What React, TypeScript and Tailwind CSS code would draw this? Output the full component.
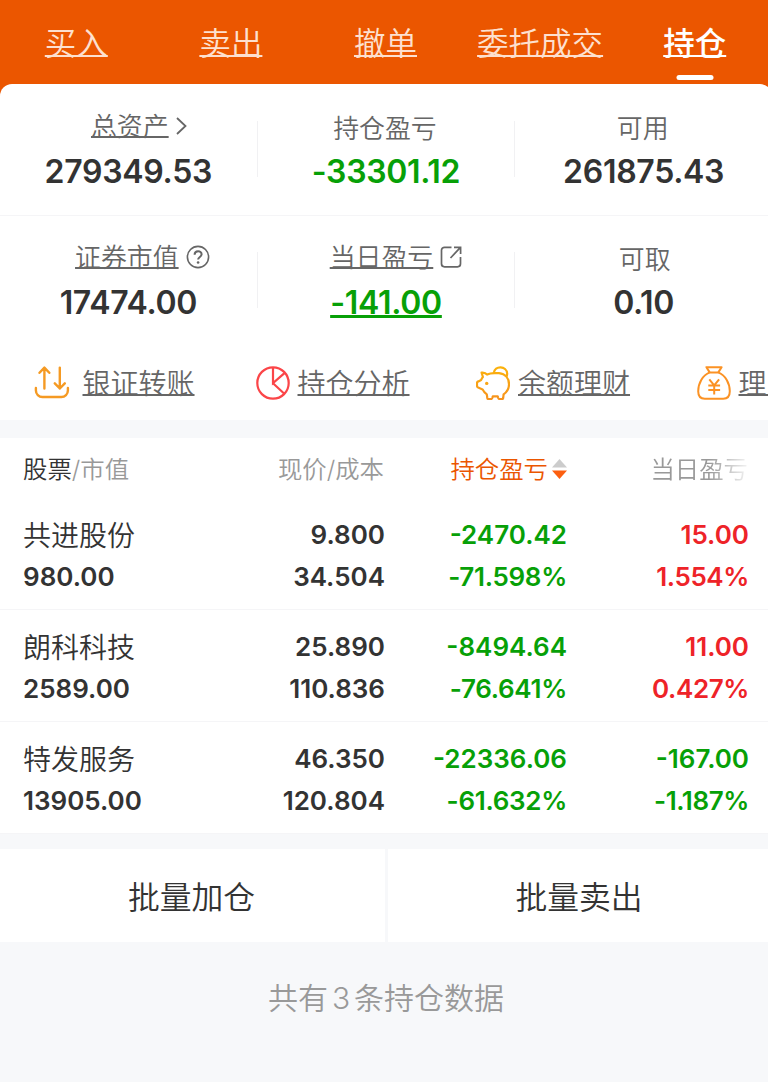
import type { ReactNode } from "react";
import { clsx } from "clsx";

const tabs = ["买入", "卖出", "撤单", "委托成交", "持仓"];

const link = "underline [text-decoration-skip-ink:none]";

const holdings = [
  { name: "共进股份", value: "980.00", price: "9.800", cost: "34.504", profit: "-2470.42", rate: "-71.598%", day: "15.00", dayRate: "1.554%" },
  { name: "朗科科技", value: "2589.00", price: "25.890", cost: "110.836", profit: "-8494.64", rate: "-76.641%", day: "11.00", dayRate: "0.427%" },
  { name: "特发服务", value: "13905.00", price: "46.350", cost: "120.804", profit: "-22336.06", rate: "-61.632%", day: "-167.00", dayRate: "-1.187%" },
];

const tone = (n: string) => (n.startsWith("-") ? "text-[#07a007]" : "text-[#ee2328]");

function ChevronIcon() {
  return (
    <svg width="11" height="18" viewBox="0 0 11 18" fill="none" stroke="#666" strokeWidth="1.8">
      <path d="M1 1l8.5 8L1 17" />
    </svg>
  );
}

function HelpIcon() {
  return (
    <svg width="24" height="24" viewBox="0 0 24 24" fill="none" stroke="#666" strokeWidth="1.6">
      <circle cx="12" cy="12" r="10.6" />
      <path d="M8.6 9.8c0-4.7 7-4.5 7-.5 0 2.7-3.5 2.6-3.5 5.3" strokeWidth="2" />
      <circle cx="12.1" cy="17.5" r="1.3" fill="#666" stroke="none" />
    </svg>
  );
}

function OpenIcon() {
  return (
    <svg width="22" height="22" viewBox="0 0 22 22" fill="none" stroke="#666" strokeWidth="1.7">
      <path d="M11.5 1.3H4.5a3 3 0 0 0-3 3v13.5a3 3 0 0 0 3 3h13a3 3 0 0 0 3-3V11" />
      <path d="M14 1.3h6.6V8M20.2 1.7L10.5 12" />
    </svg>
  );
}

function TransferIcon() {
  return (
    <svg className="mr-[4.5px] -ml-px" width="36" height="34" viewBox="0 0 36 34" fill="none" stroke="#f59a23" strokeWidth="2.4" strokeLinecap="round" strokeLinejoin="round">
      <path d="M1.9 22v2.5a6.5 6.5 0 0 0 6.5 6.500h19a6.500 6.500 0 0 0 6.500-6.500V22" />
      <path d="M10.400 22.500V1.600M5.500 6.800l4.900-5.200 4.900 5.200M25.800 1.600v20.900M20.800 17.300l5 5.200 5-5.200" />
    </svg>
  );
}

function PieIcon() {
  return (
    <svg width="34" height="34" viewBox="0 0 34 34" fill="none" stroke="#fb4548" strokeWidth="2.2">
      <circle cx="17" cy="17" r="15.7" />
      <path d="M17 1.300v15.900l11.500-10M17 17.200L28.600 28" />
    </svg>
  );
}

function PiggyIcon() {
  return (
    <svg width="34" height="34" viewBox="0 0 34 34" fill="none" strokeWidth="2.2" strokeLinejoin="round">
      <defs>
        <linearGradient id="piggy" x1="0" y1="0" x2="0" y2="34" gradientUnits="userSpaceOnUse">
          <stop stopColor="#fbb30b" />
          <stop offset="1" stopColor="#f6921e" />
        </linearGradient>
      </defs>
      <g stroke="url(#piggy)">
        <path d="M5.600 6.600c2.600-.3 4.300.4 5.500 2 2-1 4.200-1.400 7.500-1.400h4.400C29.500 8 33 12.600 33 18.200c0 4.400-2 7.800-5.400 10.100L27.200 32c-.1.600-.5 1-1.100 1h-2.700c-.6 0-1-.4-1.200-1l-.5-1.700h-4.900l-.5 1.700c-.2.600-.6 1-1.200 1h-2.700c-.6 0-1-.4-1.100-1l-.5-3.700c-2-1.300-3.300-2.900-4.200-4.900L2.200 21.600C1.400 21.200 1 20.500 1 19.700v-2.500c0-.8.500-1.500 1.300-1.800l2.900-1.500c.4-1 .9-2 1.700-2.900z" />
        <path d="M17.800 7.200c.7-8 13-7.800 13.400.5 0 1.500-.4 2.600-1.200 3.500" />
      </g>
      <circle cx="10.700" cy="17.400" r="1.700" fill="#f9a514" />
    </svg>
  );
}

function MoneyBagIcon() {
  return (
    <svg width="34" height="34" viewBox="0 0 34 34" fill="none" stroke="#fb9224" strokeWidth="2" strokeLinejoin="round">
      <path d="M9.400 1.200h15.200l-3.300 5.200h-8.600z" />
      <path d="M12.700 6.400C5.500 9.500 1.200 17 1.200 25.300c0 4.700 2.400 7.500 6.600 7.500h18.400c4.200 0 6.600-2.800 6.600-7.500 0-8.300-4.300-15.800-11.500-18.900" />
      <path d="M12.300 13.300l4.900 6 4.900-6M11.300 19.400h11.800M11.300 24h11.800M17.200 19.400v9" />
    </svg>
  );
}

type StatProps = {
  label: string;
  value: string;
  icon?: ReactNode;
  green?: boolean;
  underlined?: boolean;
  labelClass?: string;
};

function Stat({ label, value, icon, green, underlined, labelClass }: StatProps) {
  return (
    <div className="flex flex-col items-center">
      <div className={clsx("flex h-10 items-center gap-[7px] text-[25.9px] leading-10 text-[#666]", icon && "mt-[-2px] mb-[2px]", labelClass)}>
        <span className={clsx("pt-[2px]", icon && [link, "decoration-[1.5px] underline-offset-0"])}>{label}</span>
        {icon}
      </div>
      <div
        className={clsx(
          "mt-1 text-[32px] leading-10 font-[560] tracking-[-0.3px]",
          green ? "text-[#07a007]" : "text-[#333]",
          underlined && "underline decoration-[3px] underline-offset-[1px]",
        )}
      >
        {value}
      </div>
    </div>
  );
}

function Divider() {
  return <div className="mt-[13px] h-14 w-px bg-[#f1f1f3]" />;
}

function Shortcut({ icon, label }: { icon: ReactNode; label: string }) {
  return (
    <div className="flex w-[220.5px] shrink-0 items-center gap-2">
      {icon}
      <span className={clsx("pt-px text-[28px] leading-10 whitespace-nowrap text-[#666]", link, "decoration-[1.5px] underline-offset-0")}>{label}</span>
    </div>
  );
}

export default function App() {
  return (
    <div className="h-[1083px] w-full overflow-hidden bg-white font-['Inter','Noto_Sans_CJK_SC',sans-serif] font-[350]">
      <div className="w-[772px]">
        <div className="bg-[#eb5600]">
          <nav className="-ml-px grid h-[84px] grid-cols-5">
            {tabs.map((tab) => {
              const active = tab === "持仓";
              return (
                <div key={tab} className="relative flex justify-center pt-[21px]">
                  <span className={clsx("text-[31.5px] leading-[46px] decoration-2 underline-offset-0", link, active ? "font-medium text-white" : "text-[#fde0cf]")}>{tab}</span>
                  {active && <span className="absolute bottom-1 left-1/2 h-[5px] w-[37px] -translate-x-1/2 rounded-full bg-white" />}
                </div>
              );
            })}
          </nav>
          <section className="rounded-t-xl bg-white">
            <div className="grid h-[131px] grid-cols-[1fr_1px_1fr_1px_1fr] pt-6">
              <Stat label="总资产" value="279349.53" icon={<ChevronIcon />} labelClass="pl-[21px]" />
              <Divider />
              <Stat label="持仓盈亏" value="-33301.12" green labelClass="pr-0.5" />
              <Divider />
              <Stat label="可用" value="261875.43" labelClass="pr-0.5" />
            </div>
            <div className="grid h-[131px] grid-cols-[1fr_1px_1fr_1px_1fr] border-t border-[#f5f5f7] pt-[23px]">
              <Stat label="证券市值" value="17474.00" icon={<HelpIcon />} labelClass="pl-7" />
              <Divider />
              <Stat label="当日盈亏" value="-141.00" icon={<OpenIcon />} green underlined labelClass="pl-5" />
              <Divider />
              <Stat label="可取" value="0.10" labelClass="pl-0.5" />
            </div>
            <div className="flex h-[74px] items-center pl-[35px]">
              <Shortcut icon={<TransferIcon />} label="银证转账" />
              <Shortcut icon={<PieIcon />} label="持仓分析" />
              <Shortcut icon={<PiggyIcon />} label="余额理财" />
              <Shortcut icon={<MoneyBagIcon />} label="理财" />
            </div>
          </section>
        </div>

        <div className="h-[18px] bg-[#f7f8fa]" />

        <section>
          <div className="grid h-[60px] grid-cols-[203px_159px_182px_182px] items-center pt-0.5 pl-[23px] text-[24.4px] whitespace-nowrap text-[#999]">
            <div>
              <span className="text-[#333]">股票</span>/市值
            </div>
            <div className="pr-px text-right">现价/成本</div>
            <div className="flex items-center justify-end gap-1 text-[#eb5600]">
              持仓盈亏
              <svg width="15" height="20" viewBox="0 0 15 20">
                <path d="M7.5 0L15 8.500H0z" fill="#ccc" />
                <path d="M7.5 20L15 11.500H0z" fill="#fc5f10" />
              </svg>
            </div>
            <div className="pr-px text-right [mask-image:linear-gradient(to_right,black_78%,transparent_102%)]">当日盈亏</div>
          </div>
          {holdings.map((h) => (
            <div key={h.name} className="grid h-[112px] grid-cols-[203px_159px_182px_182px] border-b border-[#f5f5f7] pt-4 pl-[23px] text-[26px] leading-[42px] font-semibold text-[#333]">
              <div>
                <div className="h-[42px] pt-px text-[28px] font-[350]">{h.name}</div>
                <div>{h.value}</div>
              </div>
              <div className="text-right">
                <div>{h.price}</div>
                <div>{h.cost}</div>
              </div>
              <div className={clsx("text-right", tone(h.profit))}>
                <div>{h.profit}</div>
                <div className="tracking-[-0.3px]">{h.rate}</div>
              </div>
              <div className={clsx("text-right", tone(h.day))}>
                <div>{h.day}</div>
                <div className="tracking-[-0.4px]">{h.dayRate}</div>
              </div>
            </div>
          ))}
        </section>

        <section className="h-[248px] bg-[#f7f8fa] pt-[15px]">
          <div className="grid h-[93px] grid-cols-[385px_1fr] gap-[3px] text-[31.8px] text-[#333]">
            <button className="bg-white pt-1 pr-0.5">批量加仓</button>
            <button className="bg-white pt-1 pr-0.5">批量卖出</button>
          </div>
          <p className="mt-9 text-center text-[30px] leading-10 [word-spacing:-4.5px] text-[#999]">共有 3 条持仓数据</p>
        </section>
      </div>
    </div>
  );
}
